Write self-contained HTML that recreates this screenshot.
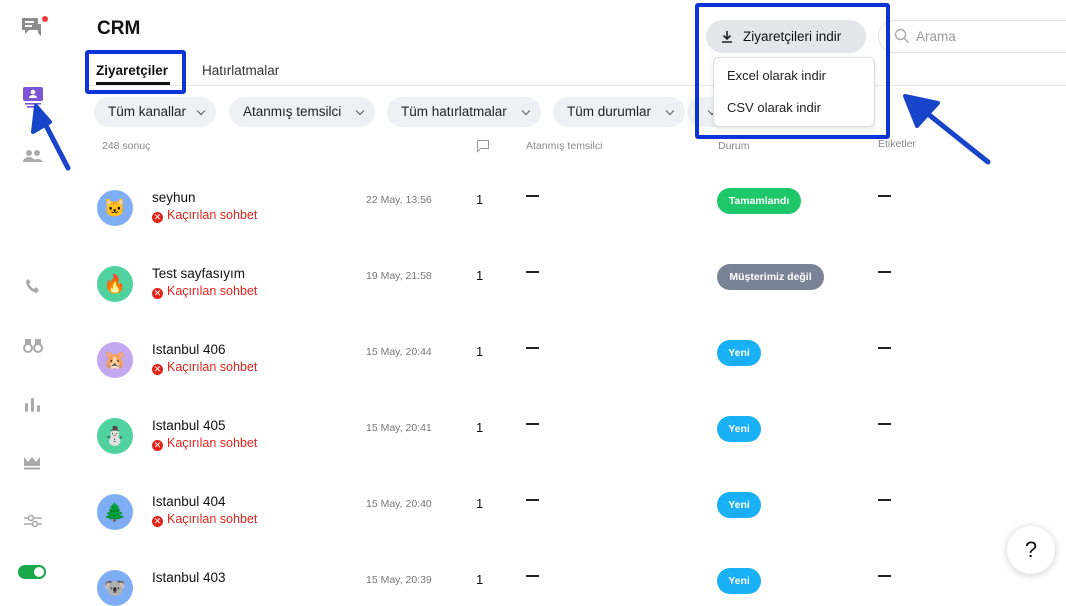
<!DOCTYPE html>
<html><head><meta charset="utf-8"><style>
*{margin:0;padding:0;box-sizing:border-box}
body{width:1066px;height:590px;overflow:hidden;background:#fff;font-family:"Liberation Sans",sans-serif;color:#111;position:relative}
.a{position:absolute}
.chip{position:absolute;top:97px;height:30px;border-radius:15px;background:#eef0f3;font-size:13.5px;line-height:30px;padding-left:14px;color:#222}
.chip::after{content:"";position:absolute;right:12px;top:11px;width:5px;height:5px;border-right:1.5px solid #555;border-bottom:1.5px solid #555;transform:rotate(45deg)}
.hdr{position:absolute;top:140px;font-size:10.5px;color:#888}
.av{position:absolute;left:97px;width:36px;height:36px;border-radius:50%;text-align:center;line-height:36px;font-size:18px}
.nm{position:absolute;left:152px;font-size:13.5px;color:#111}
.ms{position:absolute;left:152px;font-size:12.5px;color:#e3241b}
.ms i{display:inline-block;width:11px;height:11px;border-radius:50%;background:#e3241b;color:#fff;font-style:normal;font-size:9px;line-height:11px;text-align:center;margin-right:4px;vertical-align:-1px}
.dt{position:absolute;left:366px;font-size:10.5px;color:#777}
.one{position:absolute;left:476px;font-size:13px}
.dash{position:absolute;width:13px;height:1.5px;background:#222}
.bd{position:absolute;left:717px;height:26px;border-radius:13px;color:#fff;font-size:10.5px;font-weight:bold;line-height:26px;text-align:center}
.si{position:absolute;left:24px;width:18px;height:18px}
</style></head><body>
<!-- sidebar -->
<svg class="a" style="left:20px;top:16px" width="30" height="26" viewBox="0 0 30 26"><path d="M2 2h16v12h-9l-4 4v-4H2z" fill="#8d8d8d"/><path d="M5 6h9M5 10h7" stroke="#fff" stroke-width="2"/><path d="M18 8h3v12l-3-3" fill="#8d8d8d"/><circle cx="25" cy="3" r="3" fill="#ef3b3b"/></svg>
<svg class="a" style="left:22px;top:86px" width="22" height="22" viewBox="0 0 22 22"><rect x="1" y="1" width="20" height="14" rx="2" fill="#7b55d8"/><circle cx="11" cy="6" r="2.3" fill="#fff"/><path d="M7 12a4 3 0 0 1 8 0z" fill="#fff"/><rect x="3" y="17" width="16" height="1.6" fill="#7b55d8"/><rect x="5" y="20" width="12" height="1.6" fill="#7b55d8"/></svg>
<svg class="a" style="left:23px;top:149px" width="20" height="14" viewBox="0 0 20 14"><circle cx="6" cy="4" r="3" fill="#aaa"/><circle cx="14" cy="4" r="3" fill="#aaa"/><path d="M0 13a6 5 0 0 1 12 0zM9 13a6 5 0 0 1 11 0z" fill="#aaa"/></svg>
<svg class="a" style="left:25px;top:278px" width="16" height="16" viewBox="0 0 16 16"><path d="M3 1l3 3-2 2c1 2 3 4 5 5l2-2 3 3-2 3C6 14 1 9 1 3z" fill="#aaa"/></svg>
<svg class="a" style="left:23px;top:337px" width="20" height="16" viewBox="0 0 20 16"><circle cx="5" cy="11" r="4" fill="none" stroke="#aaa" stroke-width="2"/><circle cx="15" cy="11" r="4" fill="none" stroke="#aaa" stroke-width="2"/><rect x="2" y="2" width="6" height="6" fill="#aaa"/><rect x="12" y="2" width="6" height="6" fill="#aaa"/></svg>
<svg class="a" style="left:24px;top:397px" width="16" height="16" viewBox="0 0 16 16"><rect x="1" y="6" width="3" height="9" rx="1.5" fill="#aaa"/><rect x="7" y="1" width="3" height="14" rx="1.5" fill="#aaa"/><rect x="13" y="8" width="3" height="7" rx="1.5" fill="#aaa"/></svg>
<svg class="a" style="left:23px;top:456px" width="18" height="14" viewBox="0 0 18 14"><path d="M1 1l4 5 4-5 4 5 4-5v9H1z" fill="#aaa"/><rect x="1" y="11.5" width="16" height="2" fill="#aaa"/></svg>
<svg class="a" style="left:23px;top:513px" width="20" height="16" viewBox="0 0 20 16"><path d="M1 5h18M1 11h18" stroke="#aaa" stroke-width="1.6"/><circle cx="8" cy="5" r="2.5" fill="#fff" stroke="#aaa" stroke-width="1.6"/><circle cx="12" cy="11" r="2.5" fill="#fff" stroke="#aaa" stroke-width="1.6"/></svg>
<div class="a" style="left:18px;top:565px;width:28px;height:14px;border-radius:7px;background:#17a94a"><div class="a" style="right:2px;top:2px;width:10px;height:10px;border-radius:50%;background:#fff"></div></div>

<div class="a" style="left:97px;top:18px;font-size:19px;font-weight:bold">CRM</div>
<div class="a" style="left:96px;top:63px;font-size:13.5px;font-weight:bold">Ziyaretçiler</div>
<div class="a" style="left:96px;top:82px;width:74px;height:3px;background:#111"></div>
<div class="a" style="left:202px;top:63px;font-size:13.5px;color:#333">Hatırlatmalar</div>
<div class="a" style="left:85px;top:85px;width:981px;height:1px;background:#e6e6e6"></div>
<div class="a" style="left:85px;top:50px;width:101px;height:44px;border:4px solid #0a34d8;border-radius:3px"></div>

<div class="chip" style="left:94px;width:122px">Tüm kanallar</div>
<div class="chip" style="left:229px;width:146px">Atanmış temsilci</div>
<div class="chip" style="left:387px;width:154px">Tüm hatırlatmalar</div>
<div class="chip" style="left:553px;width:132px">Tüm durumlar</div>
<div class="chip" style="left:687px;width:40px"></div>

<div class="hdr" style="left:102px">248 sonuç</div>
<svg class="a" style="left:476px;top:139px" width="14" height="14" viewBox="0 0 14 14"><path d="M1.5 1.5h11v8h-8l-3 3z" fill="none" stroke="#999" stroke-width="1.1"/></svg>
<div class="hdr" style="left:526px">Atanmış temsilci</div>
<div class="hdr" style="left:718px">Durum</div>
<div class="hdr" style="left:878px;top:138px">Etiketler</div>

<!-- rows -->
<div class="av" style="top:190px;background:#80aef5">🐱</div><div class="nm" style="top:190px">seyhun</div><div class="ms" style="top:208px"><i>✕</i>Kaçırılan sohbet</div><div class="dt" style="top:194px">22 May, 13:56</div><div class="one" style="top:192px">1</div><div class="dash" style="left:526px;top:195px"></div><div class="bd" style="top:188px;width:84px;background:#1ec86a">Tamamlandı</div><div class="dash" style="left:878px;top:195px"></div>
<div class="av" style="top:266px;background:#4fd1a0">🔥</div><div class="nm" style="top:266px">Test sayfasıyım</div><div class="ms" style="top:284px"><i>✕</i>Kaçırılan sohbet</div><div class="dt" style="top:270px">19 May, 21:58</div><div class="one" style="top:268px">1</div><div class="dash" style="left:526px;top:271px"></div><div class="bd" style="top:264px;width:107px;background:#7a8396">Müşterimiz değil</div><div class="dash" style="left:878px;top:271px"></div>
<div class="av" style="top:342px;background:#c3a8f0">🐹</div><div class="nm" style="top:342px">Istanbul 406</div><div class="ms" style="top:360px"><i>✕</i>Kaçırılan sohbet</div><div class="dt" style="top:346px">15 May, 20:44</div><div class="one" style="top:344px">1</div><div class="dash" style="left:526px;top:347px"></div><div class="bd" style="top:340px;width:44px;background:#1ab0f5">Yeni</div><div class="dash" style="left:878px;top:347px"></div>
<div class="av" style="top:418px;background:#4fd1a0">⛄</div><div class="nm" style="top:418px">Istanbul 405</div><div class="ms" style="top:436px"><i>✕</i>Kaçırılan sohbet</div><div class="dt" style="top:422px">15 May, 20:41</div><div class="one" style="top:420px">1</div><div class="dash" style="left:526px;top:423px"></div><div class="bd" style="top:416px;width:44px;background:#1ab0f5">Yeni</div><div class="dash" style="left:878px;top:423px"></div>
<div class="av" style="top:494px;background:#80aef5">🌲</div><div class="nm" style="top:494px">Istanbul 404</div><div class="ms" style="top:512px"><i>✕</i>Kaçırılan sohbet</div><div class="dt" style="top:498px">15 May, 20:40</div><div class="one" style="top:496px">1</div><div class="dash" style="left:526px;top:499px"></div><div class="bd" style="top:492px;width:44px;background:#1ab0f5">Yeni</div><div class="dash" style="left:878px;top:499px"></div>
<div class="av" style="top:570px;background:#80aef5">🐨</div><div class="nm" style="top:570px">Istanbul 403</div><div class="dt" style="top:574px">15 May, 20:39</div><div class="one" style="top:572px">1</div><div class="dash" style="left:526px;top:575px"></div><div class="bd" style="top:568px;width:44px;background:#1ab0f5">Yeni</div><div class="dash" style="left:878px;top:575px"></div>

<!-- download area -->
<div class="a" style="left:706px;top:20px;width:160px;height:33px;border-radius:17px;background:#e4e6ea;font-size:13.5px;line-height:33px;padding-left:37px;font-weight:500">Ziyaretçileri indir</div>
<svg class="a" style="left:721px;top:30px" width="12" height="13" viewBox="0 0 12 13"><path d="M6 1v8M2.5 5.5L6 9l3.5-3.5M1 12h10" stroke="#222" stroke-width="1.6" fill="none"/></svg>
<div class="a" style="left:878px;top:20px;width:200px;height:33px;border:1px solid #e3e3e3;border-right:none;border-radius:17px 0 0 17px"></div>
<svg class="a" style="left:894px;top:28px" width="16" height="16" viewBox="0 0 16 16"><circle cx="6.5" cy="6.5" r="5" fill="none" stroke="#aaa" stroke-width="1.4"/><path d="M10 10l4.5 4.5" stroke="#aaa" stroke-width="1.4"/></svg>
<div class="a" style="left:916px;top:29px;font-size:13.5px;color:#999">Arama</div>
<div class="a" style="left:713px;top:57px;width:162px;height:70px;background:#fff;border:1px solid #ddd;border-radius:6px;box-shadow:0 2px 6px rgba(0,0,0,.1)"></div>
<div class="a" style="left:727px;top:68px;font-size:13px;color:#222">Excel olarak indir</div>
<div class="a" style="left:727px;top:100px;font-size:13px;color:#222">CSV olarak indir</div>
<div class="a" style="left:695px;top:3px;width:195px;height:136px;border:4px solid #0a34d8;border-radius:3px"></div>

<!-- arrows -->
<svg class="a" style="left:0;top:0" width="1066" height="590">
<path d="M68 168L40 114" stroke="#1744c8" stroke-width="5" stroke-linecap="round"/>
<path d="M36 106L33 132L50 122z" fill="#1744c8" stroke="#1744c8" stroke-width="4" stroke-linejoin="round"/>
<path d="M988 162L918 106" stroke="#1744c8" stroke-width="5" stroke-linecap="round"/>
<path d="M905 96L917 126L938 103z" fill="#1744c8" stroke="#1744c8" stroke-width="4" stroke-linejoin="round"/>
</svg>

<div class="a" style="left:1007px;top:526px;width:48px;height:48px;border-radius:50%;background:#fff;box-shadow:0 1px 8px rgba(0,0,0,.2);text-align:center;line-height:48px;font-size:22px">?</div>
</body></html>
